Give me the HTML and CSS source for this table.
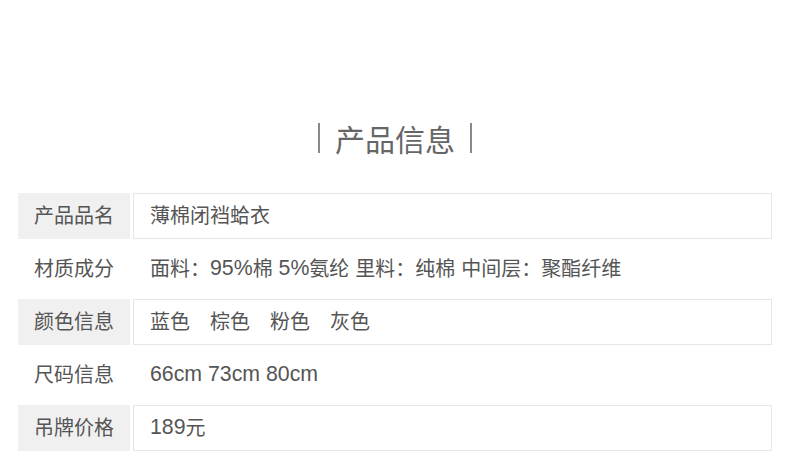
FILE: index.html
```html
<!DOCTYPE html>
<html lang="zh-CN">
<head>
    <meta charset="UTF-8">
    <meta name="viewport" content="width=device-width, initial-scale=1.0">
    <title>产品信息</title>
    <link rel="stylesheet" href="styles.css">
</head>
<body>
    <div class="container">
        <h2 class="section-title"><span class="bar"></span>产品信息<span class="bar"></span></h2>

        <div class="info-table">
            <div class="info-row shaded">
                <div class="info-label">产品品名</div>
                <div class="info-value">薄棉闭裆蛤衣</div>
            </div>
            <div class="info-row">
                <div class="info-label">材质成分</div>
                <div class="info-value">面料：<span class="num">95%</span>棉<span class="num"> 5%</span>氨纶<span class="num"> </span>里料：纯棉<span class="num"> </span>中间层：聚酯纤维</div>
            </div>
            <div class="info-row shaded">
                <div class="info-label">颜色信息</div>
                <div class="info-value">蓝色　棕色　粉色　灰色</div>
            </div>
            <div class="info-row">
                <div class="info-label">尺码信息</div>
                <div class="info-value"><span class="num">66cm 73cm 80cm</span></div>
            </div>
            <div class="info-row shaded">
                <div class="info-label">吊牌价格</div>
                <div class="info-value"><span class="num">189</span>元</div>
            </div>
        </div>
    </div>
</body>
</html>
```

FILE: styles.css
```css
body {
    font-family: 'Liberation Sans', 'Noto Sans CJK SC', sans-serif;
    margin: 0;
    padding: 0;
    background-color: #fff;
    color: #555;
}
.container {
    padding: 0 18px;
}
.section-title {
    margin: 0;
    padding-top: 118px;
    height: 40px;
    display: flex;
    align-items: center;
    justify-content: center;
    font-size: 30px;
    font-weight: normal;
    color: #666;
}
.bar {
    width: 2px;
    height: 30px;
    margin: 0 15px;
    background-color: #8a8a8a;
}
.info-table {
    margin-top: 35px;
}
.info-row {
    display: flex;
    gap: 3px;
    height: 46px;
    margin-bottom: 7px;
}
.info-row:last-child {
    margin-bottom: 0;
}
.info-label {
    width: 112px;
    flex-shrink: 0;
    display: flex;
    align-items: center;
    justify-content: center;
    font-size: 20px;
    line-height: 1;
}
.info-value {
    flex: 1;
    display: flex;
    align-items: center;
    padding-left: 16px;
    font-size: 20px;
    line-height: 1;
    border: 1px solid transparent;
    white-space: pre;
}
.num {
    font-size: 21.3px;
}
.shaded .info-label {
    background-color: #f0f0f0;
}
.shaded .info-value {
    border-color: #e6e6e6;
}
```
